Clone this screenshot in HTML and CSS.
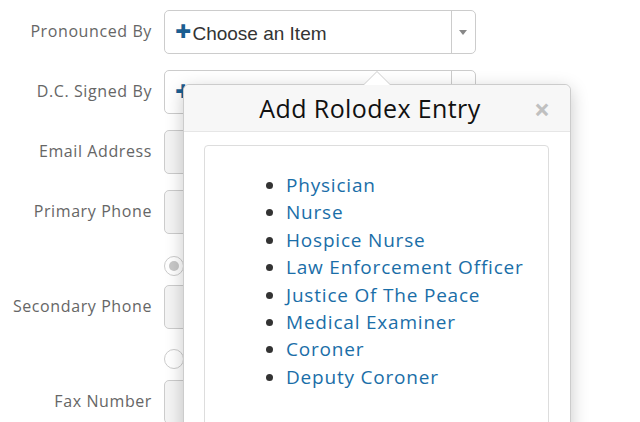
FILE: index.html
```html
<!DOCTYPE html>
<html lang="en">
<head>
  <meta charset="UTF-8" />
  <title>Contact Details</title>
  <link rel="stylesheet" href="styles.css">
</head>
<body>

  <div class="form-container">
    <div class="row">
      <label>Pronounced By</label>
      <div class="select-box">
        <span class="plus">+</span>
        <span class="select-text">Choose an Item</span>
        <span class="select-arrow"></span>
      </div>
    </div>

    <div class="row">
      <label>D.C. Signed By</label>
      <div class="select-box">
        <span class="plus">+</span>
        <span class="select-text">Choose an Item</span>
        <span class="select-arrow"></span>
      </div>
    </div>

    <div class="row">
      <label>Email Address</label>
      <div class="text-box"></div>
    </div>

    <div class="row">
      <label>Primary Phone</label>
      <div class="text-box"></div>
    </div>

    <div class="row radio-row first-radio">
      <label></label>
      <span class="radio checked"></span>
    </div>

    <div class="row after-radio">
      <label>Secondary Phone</label>
      <div class="text-box"></div>
    </div>

    <div class="row radio-row second-radio">
      <label></label>
      <span class="radio"></span>
    </div>

    <div class="row after-radio2">
      <label>Fax Number</label>
      <div class="text-box"></div>
    </div>

    <!-- rolodex popover -->
    <div class="popover">
      <div class="popover-arrow"></div>
      <div class="popover-header">
        <h3>Add Rolodex Entry</h3>
        <span class="close-btn">&times;</span>
      </div>
      <div class="popover-body">
        <div class="entry-box">
          <ul>
            <li><a href="#">Physician</a></li>
            <li><a href="#">Nurse</a></li>
            <li><a href="#">Hospice Nurse</a></li>
            <li><a href="#">Law Enforcement Officer</a></li>
            <li><a href="#">Justice Of The Peace</a></li>
            <li><a href="#">Medical Examiner</a></li>
            <li><a href="#">Coroner</a></li>
            <li><a href="#">Deputy Coroner</a></li>
          </ul>
        </div>
      </div>
    </div>
  </div>

</body>
</html>
```

FILE: styles.css
```css
body {
  margin: 0;
  font-family: 'Open Sans', sans-serif;
  background: #fff;
  color: #333;
  overflow: hidden;
}
.form-container {
  position: relative;
  padding-top: 10px;
}
.row {
  display: flex;
  align-items: center;
  margin-bottom: 16px;
}
.row label {
  width: 152px;
  margin-right: 12px;
  text-align: right;
  font-size: 16px;
  letter-spacing: 0.6px;
  color: #666;
  margin-top: -3px;
}
.select-box, .text-box {
  width: 312px;
  height: 44px;
  box-sizing: border-box;
  border: 1px solid #ccc;
  border-radius: 5px;
}
.select-box {
  display: flex;
  align-items: center;
  background: #fff;
  padding-left: 10px;
}
.text-box {
  background: #f4f4f4;
}
.plus {
  color: #1b5e91;
  font-size: 28px;
  font-weight: 800;
  line-height: 1;
  margin-right: 1px;
  margin-top: -5px;
}
.select-text {
  flex: 1;
  font-family: 'Liberation Sans', Arial, sans-serif;
  font-size: 19px;
  color: #333;
  margin-top: 3px;
}
.select-arrow {
  width: 23px;
  height: 100%;
  border-left: 1px solid #ccc;
  position: relative;
}
.select-arrow::after {
  content: '';
  position: absolute;
  left: 7px;
  top: 19px;
  border-left: 4px solid transparent;
  border-right: 4px solid transparent;
  border-top: 5px solid #888;
}
.radio-row {
  margin-bottom: 0;
}
.first-radio {
  margin-top: 22px;
}
.after-radio {
  margin-top: 9px;
  margin-bottom: 0;
}
.second-radio {
  margin-top: 20px;
}
.after-radio2 {
  margin-top: 11px;
}
.radio {
  width: 20px;
  height: 20px;
  box-sizing: border-box;
  border: 1px solid #ccc;
  border-radius: 50%;
  background: #fff;
  position: relative;
}
.radio.checked::after {
  content: '';
  position: absolute;
  left: 4px;
  top: 4px;
  width: 10px;
  height: 10px;
  border-radius: 50%;
  background: #c8c8c8;
}
.popover {
  position: absolute;
  left: 183px;
  top: 84px;
  width: 388px;
  height: 400px;
  box-sizing: border-box;
  background: #fff;
  border: 1px solid #ccc;
  border-radius: 6px;
  box-shadow: 0 5px 18px rgba(0, 0, 0, 0.22);
}
.popover-arrow {
  position: absolute;
  left: 179px;
  top: -14px;
  width: 0;
  height: 0;
  border-left: 14px solid transparent;
  border-right: 14px solid transparent;
  border-bottom: 14px solid #ccc;
}
.popover-arrow::after {
  content: '';
  position: absolute;
  left: -13px;
  top: 1px;
  border-left: 13px solid transparent;
  border-right: 13px solid transparent;
  border-bottom: 13px solid #fff;
}
.popover-header {
  height: 46px;
  background: #f7f7f7;
  border-bottom: 1px solid #e6e6e6;
  border-radius: 6px 6px 0 0;
  display: flex;
  align-items: center;
  justify-content: center;
  position: relative;
  padding-right: 14px;
}
.popover-header h3 {
  margin: 0;
  font-size: 25px;
  font-weight: 400;
  letter-spacing: 0.4px;
  color: #111;
}
.close-btn {
  position: absolute;
  right: 20px;
  top: 10px;
  font-size: 28px;
  font-weight: 700;
  color: #c0c0c0;
  line-height: 1;
}
.popover-body {
  padding: 13px 21px 0 20px;
}
.entry-box {
  border: 1px solid #ddd;
  border-radius: 4px;
  height: 300px;
  padding-top: 26px;
}
.entry-box ul {
  margin: 0;
  padding-left: 81px;
}
.entry-box li {
  font-size: 19px;
  line-height: 27.4px;
  letter-spacing: 0.8px;
  color: #333;
}
.entry-box a {
  color: #1a6ea8;
  text-decoration: none;
}
```
